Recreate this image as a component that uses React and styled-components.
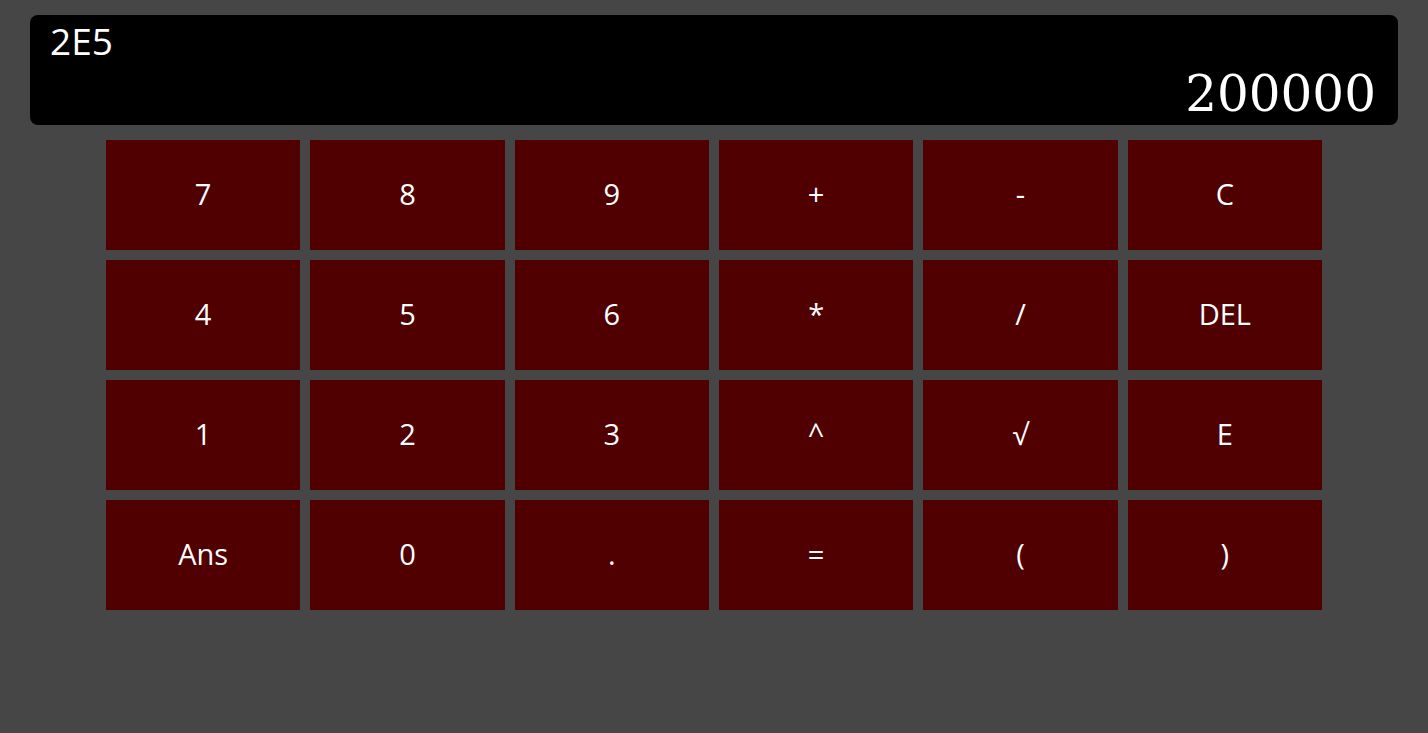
import React from "react"
import styled, { createGlobalStyle } from "styled-components"

const GlobalStyle = createGlobalStyle`
  html, body {
    margin: 0;
    padding: 0;
    background: #464646;
    height: 100%;
  }
  body {
    font-family: "Open Sans", "Noto Sans", sans-serif;
  }
`

const Calculator = styled.div`
  min-height: 733px;
  padding: 15px 30px 0;
  box-sizing: border-box;
`

const Display = styled.div`
  height: 110px;
  background: #000;
  border-radius: 8px;
  padding: 0 22px 0 20px;
  box-sizing: border-box;
  display: flex;
  flex-direction: column;
  justify-content: space-between;
  color: #fff;
`

const Expression = styled.div`
  font-family: "Open Sans", "Noto Sans", sans-serif;
  font-size: 37px;
  line-height: 46px;
  margin-top: 3px;
`

const Result = styled.div`
  font-family: "DejaVu Serif", serif;
  font-size: 50px;
  line-height: 61px;
  text-align: right;
`

const Keypad = styled.div`
  width: 1216px;
  margin: 15px auto 0;
  display: grid;
  grid-template-columns: repeat(6, 1fr);
  grid-auto-rows: 110px;
  gap: 10px;
`

const Key = styled.button`
  border: none;
  margin: 0;
  padding: 0 0 3px;
  background: #500000;
  color: #fff;
  font-family: "Open Sans", "Noto Sans", sans-serif;
  font-size: 29px;
  display: flex;
  align-items: center;
  justify-content: center;
  cursor: pointer;
`

const keys = [
  "7", "8", "9", "+", "-", "C",
  "4", "5", "6", "*", "/", "DEL",
  "1", "2", "3", "^", "√", "E",
  "Ans", "0", ".", "=", "(", ")",
]

export default function App() {
  return (
    <Calculator>
      <GlobalStyle />
      <Display>
        <Expression>2E5</Expression>
        <Result>200000</Result>
      </Display>
      <Keypad>
        {keys.map((k) => (
          <Key key={k}>{k}</Key>
        ))}
      </Keypad>
    </Calculator>
  )
}
